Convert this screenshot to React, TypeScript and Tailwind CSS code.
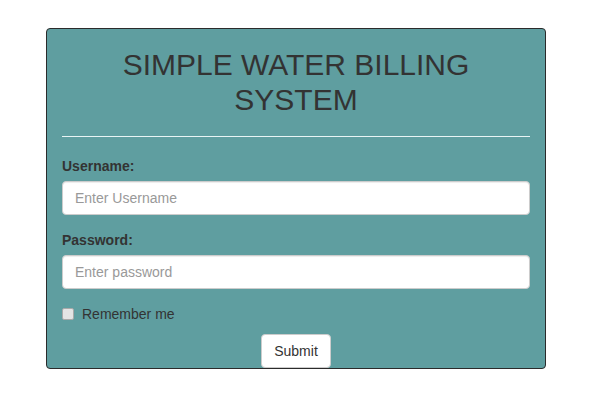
import React from "react";

export default function App() {
  return (
    <div className="min-h-[405px] w-[601px] bg-white pt-[28px]" style={{ fontFamily: '"Liberation Sans", Arial, sans-serif' }}>
      <div className="ml-[46px] w-[500px] rounded-[4px] border border-[#2b2b2b] bg-[#5f9ea0] px-[15px] text-[#333]">
        <h1 className="mt-[18px] text-center text-[30px] leading-[35px] font-normal text-[#333]">
          SIMPLE WATER BILLING
          <br />
          SYSTEM
        </h1>
        <hr className="mt-[19px] border-0 border-t border-[#e8f4f4]" />
        <form className="mt-[19px]" onSubmit={(e) => e.preventDefault()}>
          <div>
            <label className="mb-[5px] block text-[14px] leading-[20px] font-bold">Username:</label>
            <input
              type="text"
              placeholder="Enter Username"
              className="block h-[34px] w-full rounded-[4px] border border-[#ccc] bg-white px-[12px] text-[14px] text-[#555] shadow-[inset_0_1px_1px_rgba(0,0,0,0.075)] placeholder:text-[#999] outline-none"
            />
          </div>
          <div className="mt-[15px]">
            <label className="mb-[5px] block text-[14px] leading-[20px] font-bold">Password:</label>
            <input
              type="password"
              placeholder="Enter password"
              className="block h-[34px] w-full rounded-[4px] border border-[#ccc] bg-white px-[12px] text-[14px] text-[#555] shadow-[inset_0_1px_1px_rgba(0,0,0,0.075)] placeholder:text-[#999] outline-none"
            />
          </div>
          <div className="mt-[15px] flex h-[20px] items-center">
            <span className="box-border h-[12px] w-[12px] rounded-[2px] border border-[#a9a9a9] bg-[#e4e4e4]" />
            <span className="ml-[8px] text-[14px] leading-[20px] text-[#333]">Remember me</span>
          </div>
          <div className="mt-[10px] flex justify-center">
            <button
              type="submit"
              className="h-[34px] w-[70px] rounded-[4px] border border-[#ccc] bg-white text-[14px] text-[#333]"
            >
              Submit
            </button>
          </div>
        </form>
      </div>
    </div>
  );
}
